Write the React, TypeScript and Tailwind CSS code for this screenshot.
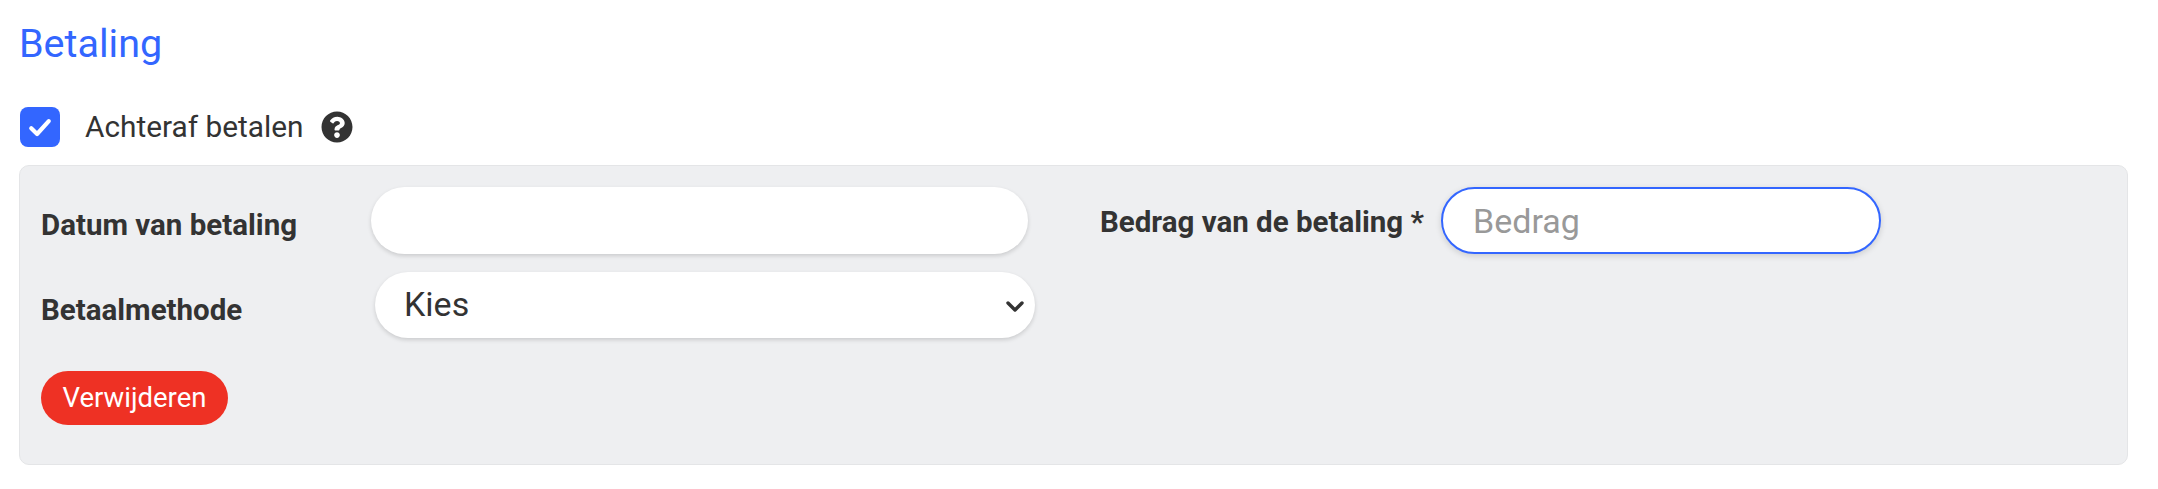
import { FaQuestionCircle } from 'react-icons/fa'

function Label({ children, className }: { children: React.ReactNode; className: string }) {
  return <label className={`shrink-0 text-[29.5px] font-bold text-[#333] leading-none ${className}`}>{children}</label>
}

export default function App() {
  return (
    <div className="w-[2158px] h-[489px] bg-white pl-[19px] pr-[29px] font-['Roboto',sans-serif] overflow-hidden">
      <h2 className="pt-[21px] text-[39.5px] leading-[45px] font-normal text-[#3366ff]">Betaling</h2>

      <div className="mt-[41px] flex items-center h-[40px] pl-px">
        <span className="flex items-center justify-center w-[40px] h-[40px] rounded-[8px] bg-[#3366ff]">
          <svg viewBox="0 0 24 24" className="w-[28px] h-[28px]" fill="none" stroke="white" strokeWidth="3.6" strokeLinecap="round" strokeLinejoin="round">
            <path d="M4.5 13l5 5L19.5 7" />
          </svg>
        </span>
        <span className="ml-[25px] text-[29.8px] leading-none text-[#333]">Achteraf betalen</span>
        <FaQuestionCircle className="ml-[18px] w-[32px] h-[32px] text-[#333]" />
      </div>

      <div className="mt-[18px] h-[300px] w-[2109px] rounded-[10px] bg-[#eeeff1] border border-[#e4e5e7] pl-[21px] pt-[21px]">
        <div className="flex items-center">
          <Label className="w-[330px] pt-[10px]">Datum van betaling</Label>
          <input className="w-[657px] h-[67px] rounded-full bg-white shadow-[0_2px_4px_rgba(0,0,0,0.15)] outline-none" />
          <Label className="ml-[72px] w-[341px] pt-[4px]">Bedrag van de betaling *</Label>
          <input
            placeholder="Bedrag"
            className="w-[440px] h-[67px] rounded-full bg-white border-2 border-[#3366ff] pl-[30px] text-[34px] text-[#333] placeholder:text-[#999] shadow-[0_2px_6px_rgba(0,0,0,0.15)] outline-none"
          />
        </div>

        <div className="mt-[18px] flex items-center">
          <Label className="w-[334px] pt-[12px]">Betaalmethode</Label>
          <div className="relative w-[660px] h-[66px]">
            <select className="w-full h-full appearance-none rounded-full bg-white pl-[29px] pb-[2px] text-[34px] text-[#333] shadow-[0_2px_4px_rgba(0,0,0,0.15)] outline-none">
              <option>Kies</option>
            </select>
            <svg viewBox="0 0 18 11" className="absolute right-[11px] top-[29px] w-[18px] h-[11px]" fill="none" stroke="#333" strokeWidth="3.4" strokeLinecap="round" strokeLinejoin="round">
              <path d="M2 2l7 7 7-7" />
            </svg>
          </div>
        </div>

        <button className="mt-[33px] w-[187px] h-[54px] rounded-full bg-[#ee3124] text-white text-[27.5px] leading-none">Verwijderen</button>
      </div>
    </div>
  )
}
